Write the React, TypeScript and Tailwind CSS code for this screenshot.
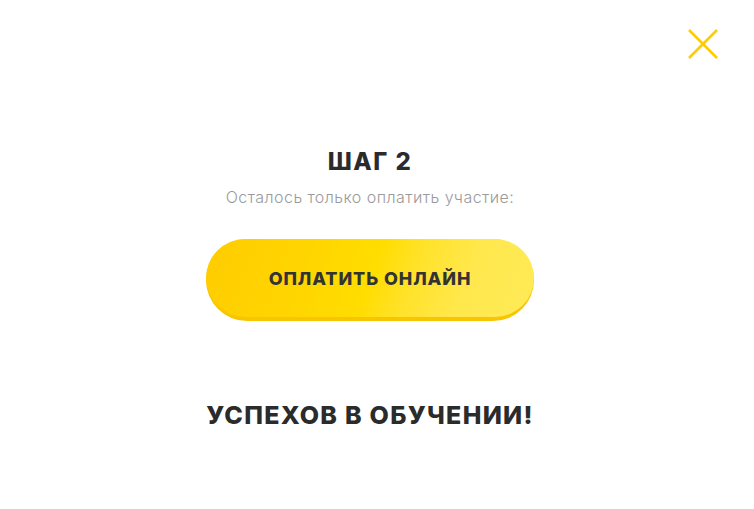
import React from "react";

export default function App() {
  return (
    <div className="relative w-[754px] h-[509px] bg-white overflow-hidden" style={{ fontFamily: "Inter, 'Noto Sans', sans-serif" }}>
      <button className="absolute left-[686px] top-[27px] w-[34px] h-[34px]">
        <svg width="34" height="34" viewBox="0 0 34 34" fill="none">
          <path d="M3 3 L31 31 M31 3 L3 31" stroke="#ffcc00" strokeWidth="2.6" />
        </svg>
      </button>
      <div className="w-[740px] flex flex-col items-center pt-[146px]">
        <h2 className="text-[24px] leading-[32px] font-extrabold text-[#2b2b2b] tracking-[1.5px]">ШАГ 2</h2>
        <p className="mt-[8px] text-[16px] leading-[22px] text-[#9a9a9a] font-light tracking-[0.45px]">Осталось только оплатить участие:</p>
        <div className="mt-[31px] w-[328px] h-[82px] rounded-full bg-[#f7c600] pb-[4px]">
          <div className="w-full h-[78px] rounded-full bg-[linear-gradient(110deg,#ffcc00_0%,#ffd500_30%,#ffdd00_50%,#ffe22a_62%,#ffe84d_78%,#ffeb58_100%)] flex items-center justify-center">
            <span className="text-[18px] font-extrabold text-[#333333] tracking-[0.9px]">ОПЛАТИТЬ ОНЛАЙН</span>
          </div>
        </div>
        <h2 className="mt-[78px] text-[25px] leading-[32px] font-extrabold text-[#2b2b2b] tracking-[1.3px]">УСПЕХОВ В ОБУЧЕНИИ!</h2>
      </div>
    </div>
  );
}
